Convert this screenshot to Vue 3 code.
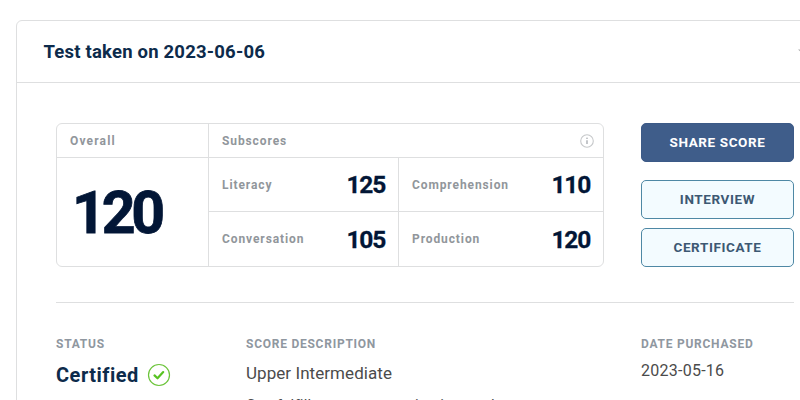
<template>
  <div class="test-card">
    <!-- Header -->
    <header class="card-header">
      <h2 class="card-title">Test taken on 2023-06-06</h2>
      <svg class="chevron" viewBox="0 0 14 8" width="14" height="8">
        <path d="M1 1.5h12L7 7z" fill="#AFAFAF" />
      </svg>
    </header>

    <div class="card-body">
      <div class="result-row">
        <!-- Score table -->
        <section class="scores">
          <div class="overall">
            <div class="scores-head"><span class="label overall-label">Overall</span></div>
            <div class="overall-value">120</div>
          </div>
          <div class="subscores">
            <div class="scores-head">
              <span class="label">Subscores</span>
              <svg class="info-icon" viewBox="0 0 14 14" width="14" height="14">
                <circle cx="7" cy="7" r="6.3" fill="none" stroke="#C6C8CA" stroke-width="1.1" />
                <circle cx="7" cy="4.2" r="0.8" fill="#A4A8AD" />
                <path d="M7 6.2V10" stroke="#A4A8AD" stroke-width="1.3" />
              </svg>
            </div>
            <div class="subscore-grid">
              <div v-for="s in subscores" :key="s.name" class="subscore">
                <span class="label">{{ s.name }}</span>
                <span class="subscore-value">{{ s.value }}</span>
              </div>
            </div>
          </div>
        </section>

        <!-- Actions -->
        <div class="actions">
          <button class="btn primary">SHARE SCORE</button>
          <button class="btn interview">INTERVIEW</button>
          <button class="btn certificate">CERTIFICATE</button>
        </div>
      </div>

      <!-- Details -->
      <div class="details">
        <div class="detail">
          <div class="detail-label">STATUS</div>
          <div class="status">
            <span class="status-text">Certified</span>
            <svg class="check-icon" viewBox="0 0 24 24" width="24" height="24">
              <circle cx="12" cy="12" r="10.5" fill="none" stroke="#6CC43A" stroke-width="1.2" />
              <path d="M7.5 12.4l3 2.9 5.7-6.2" fill="none" stroke="#58C322" stroke-width="2.2" stroke-linecap="round" stroke-linejoin="round" />
            </svg>
          </div>
        </div>
        <div class="detail">
          <div class="detail-label">SCORE DESCRIPTION</div>
          <div class="level">Upper Intermediate</div>
          <div class="level-text">Can fulfill most communication goals</div>
        </div>
        <div class="detail">
          <div class="detail-label">DATE PURCHASED</div>
          <div class="date">2023-05-16</div>
        </div>
      </div>
    </div>
  </div>
</template>

<script setup>
const subscores = [
  { name: 'Literacy', value: 125 },
  { name: 'Comprehension', value: 110 },
  { name: 'Conversation', value: 105 },
  { name: 'Production', value: 120 },
]
</script>

<style>
body {
  background: #fff;
  overflow: hidden;
}
#app {
  height: 400px;
  overflow: hidden;
}
</style>

<style scoped>
.test-card {
  box-sizing: border-box;
  width: 836px;
  height: 460px;
  margin: 20px 0 0 16px;
  border: 1px solid #DEDFE0;
  border-radius: 6px;
  background: #fff;
  font-family: Roboto, "Liberation Sans", sans-serif;
}

/* Header */
.card-header {
  display: flex;
  align-items: center;
  justify-content: space-between;
  height: 61px;
  padding: 0 40px 0 26.5px;
  border-bottom: 1px solid #DEDFE0;
}

.card-title {
  margin: 0;
  font-size: 18.5px;
  font-weight: 700;
  letter-spacing: 0.2px;
  color: #0D2B4B;
}

.card-body {
  width: 738px;
  padding: 40px 0 0 39px;
}

.result-row {
  display: flex;
  justify-content: space-between;
  padding-bottom: 35px;
  border-bottom: 1px solid #DEDFE0;
}

/* Score table */
.scores {
  box-sizing: border-box;
  display: flex;
  width: 548px;
  height: 144px;
  border: 1px solid #DEDFE0;
  border-radius: 6px;
}

.overall {
  width: 151px;
  border-right: 1px solid #DEDFE0;
}

.subscores { flex: 1; }

.scores-head {
  display: flex;
  align-items: center;
  justify-content: space-between;
  height: 33px;
  padding: 0 9px 0 13px;
  border-bottom: 1px solid #DEDFE0;
}

.label {
  font-size: 12px;
  font-weight: 700;
  letter-spacing: 0.9px;
  color: #91969B;
}
.overall-label { letter-spacing: 1.15px; }

.overall-value {
  padding: 19px 0 0 15px;
  font-size: 59px;
  font-weight: 700;
  line-height: 71px;
  letter-spacing: -4.2px;
  color: #021636;
  -webkit-text-stroke: 0.8px #021636;
}

.subscore-grid {
  display: grid;
  grid-template-columns: 190px 1fr;
  grid-template-rows: 54px 54px;
}

.subscore {
  box-sizing: border-box;
  display: flex;
  align-items: center;
  justify-content: space-between;
  padding: 0 13px;
}
.subscore:nth-child(odd) { border-right: 1px solid #DEDFE0; }
.subscore:nth-child(-n + 2) { border-bottom: 1px solid #DEDFE0; }

.subscore-value {
  font-size: 24.5px;
  font-weight: 700;
  letter-spacing: -1.2px;
  color: #021636;
  -webkit-text-stroke: 0.3px #021636;
}

/* Actions */
.actions {
  display: flex;
  flex-direction: column;
  width: 153px;
}

.btn {
  box-sizing: border-box;
  height: 39px;
  margin: 0 0 9px;
  padding: 0 0 2px;
  border: 1px solid #4E88A5;
  border-radius: 5px;
  background: #F3FBFF;
  font-family: inherit;
  font-size: 13.5px;
  font-weight: 700;
  letter-spacing: 0.6px;
  color: #3C5873;
}
.btn.primary {
  margin-bottom: 18px;
  border-color: #3C5A87;
  background: #3F5D8A;
  color: #fff;
}
.btn.certificate { margin-bottom: 0; }

/* Details */
.details {
  display: grid;
  grid-template-columns: 190px 395px 153px;
  padding-top: 33px;
}

.detail-label {
  font-size: 12px;
  font-weight: 700;
  line-height: 16px;
  letter-spacing: 0.75px;
  color: #8F979F;
}

.status {
  display: flex;
  align-items: center;
  gap: 8px;
  margin-top: 11px;
}

.status-text {
  font-size: 20px;
  font-weight: 700;
  letter-spacing: 0.5px;
  color: #0D2B4B;
}

.check-icon { display: block; }

.level {
  margin-top: 10px;
  font-size: 17px;
  line-height: 22px;
  letter-spacing: 0.06px;
  color: #4B4B4B;
}

.level-text {
  margin-top: 11px;
  font-size: 15px;
  line-height: 20px;
  letter-spacing: 0.2px;
  color: #4B4B4B;
}

.date {
  margin-top: 8px;
  font-size: 16px;
  line-height: 22px;
  letter-spacing: 0.25px;
  color: #4B4B4B;
}
</style>
